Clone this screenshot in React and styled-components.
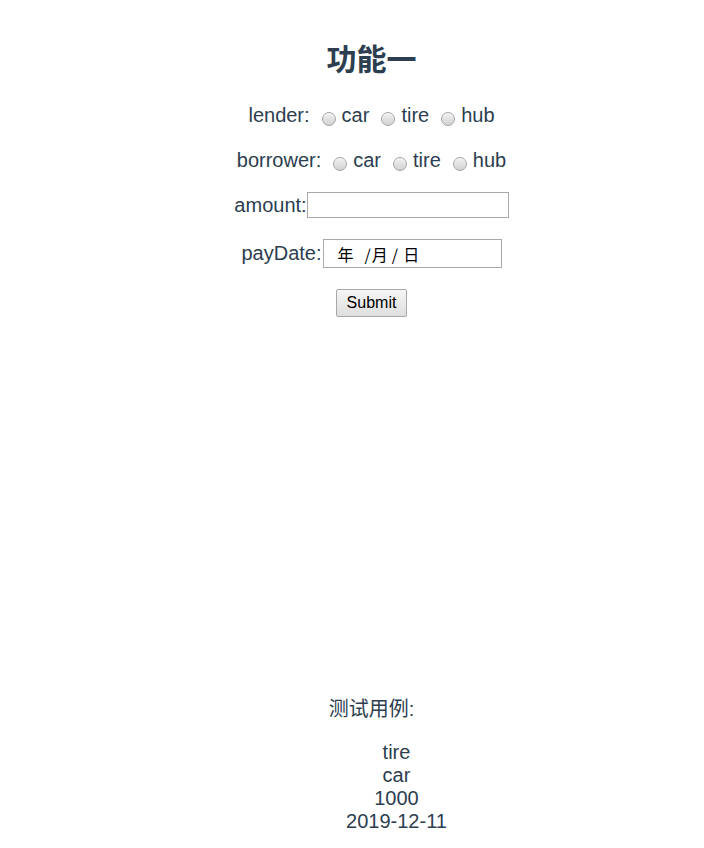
import React, { useState } from 'react'
import styled, { createGlobalStyle } from 'styled-components'

const GlobalStyle = createGlobalStyle`
body {
  margin: 0;
  background: #ffffff;
}
`

const Page = styled.div`
font-family: "Liberation Sans", Arial, "Noto Sans CJK SC", sans-serif;
color: #2c3e50;
font-size: 20px;
line-height: 23px;
padding-left: 39px;
padding-top: 42px;
display: flex;
flex-direction: column;
align-items: center;
height: 848px;
box-sizing: border-box;
`

const Title = styled.h1`
margin: 0;
font-family: "Liberation Sans", "Noto Sans CJK SC", sans-serif;
font-size: 30px;
line-height: 36px;
font-weight: 700;
`

const Row = styled.div`
display: flex;
align-items: center;
margin-top: ${props => props.gap}px;
height: ${props => props.h || 23}px;
white-space: pre;
`

const Label = styled.span`
flex-shrink: 0;
`

const Option = styled.label`
display: inline-flex;
align-items: center;
margin-left: 7px;
flex-shrink: 0;
`

const Radio = styled.input.attrs({ type: 'radio' })`
appearance: none;
-webkit-appearance: none;
flex: 0 0 14px;
width: 14px;
height: 14px;
margin: 6px 6px 0 5px;
padding: 0;
border-radius: 50%;
border: 1px solid #a3a3a3;
background: linear-gradient(#f0f0f0, #d2d2d2);
box-shadow: inset 0 1px 1px rgba(255, 255, 255, 0.8);
box-sizing: border-box;
&:checked {
  background: radial-gradient(circle, #333 0 2.5px, transparent 3px), linear-gradient(#f0f0f0, #d2d2d2);
}
`

const TextInput = styled.input`
width: 202px;
height: 26px;
box-sizing: border-box;
border: 1px solid #a9a9a9;
margin: 0;
padding: 1px 4px;
font-family: "Liberation Sans", sans-serif;
font-size: 16px;
color: #000;
outline: none;
`

const DateField = styled.div`
display: flex;
align-items: center;
width: 179px;
height: 29px;
box-sizing: border-box;
border: 1px solid #a9a9a9;
margin-left: 1px;
padding-left: 14px;
font-family: "Noto Sans CJK SC", sans-serif;
font-size: 16px;
line-height: 20px;
color: #000;
background: #fff;
`

const DatePart = styled.span`
margin-left: ${props => props.space || 0}px;
`

const SubmitButton = styled.button`
margin-top: 21px;
width: 71px;
height: 28px;
box-sizing: border-box;
border: 1px solid #a8a8a8;
border-radius: 2px;
background: linear-gradient(#f6f6f6, #dedede);
font-family: "Liberation Sans", Arial, sans-serif;
font-size: 16px;
color: #000;
padding: 0;
`

const CaseTitle = styled.div`
margin-top: 381px;
font-family: "Liberation Sans", "Noto Sans CJK SC", sans-serif;
`

const CaseList = styled.ul`
list-style: none;
margin: 20px 0 0;
padding: 0 0 0 50px;
text-align: center;
`

const options = ['car', 'tire', 'hub']

const RadioGroup = ({ name, value, onChange }) => (
    <>
        {options.map(opt => (
            <Option key={opt}>
                <Radio name={name} checked={value === opt} onChange={() => onChange(opt)} />
                {opt}
            </Option>
        ))}
    </>
)

const App = () => {
    const [lender, setLender] = useState('')
    const [borrower, setBorrower] = useState('')

    return (
        <Page>
            <GlobalStyle />
            <Title>功能一</Title>
            <Row gap={26}>
                <Label>lender:</Label>
                <RadioGroup name="lender" value={lender} onChange={setLender} />
            </Row>
            <Row gap={22}>
                <Label>borrower:</Label>
                <RadioGroup name="borrower" value={borrower} onChange={setBorrower} />
            </Row>
            <Row gap={20} h={26}>
                <Label>amount:</Label>
                <TextInput type="text" />
            </Row>
            <Row gap={21} h={29}>
                <Label>payDate:</Label>
                <DateField>
                    <DatePart>年</DatePart>
                    <DatePart space={11}>/</DatePart>
                    <DatePart space={1}>月</DatePart>
                    <DatePart space={4}>/</DatePart>
                    <DatePart space={5}>日</DatePart>
                </DateField>
            </Row>
            <SubmitButton>Submit</SubmitButton>
            <CaseTitle>测试用例:</CaseTitle>
            <CaseList>
                <li>tire</li>
                <li>car</li>
                <li>1000</li>
                <li>2019-12-11</li>
            </CaseList>
        </Page>
    )
}

export default App
